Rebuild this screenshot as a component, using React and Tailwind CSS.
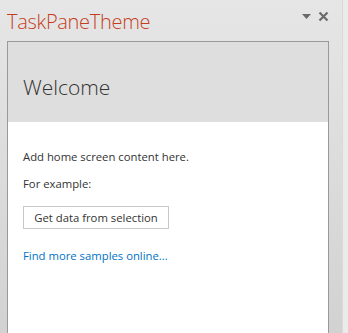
export default function App() {
  return (
    <div className="w-[348px] h-[333px] flex overflow-hidden" style={{ fontFamily: '"Open Sans", "Segoe UI", sans-serif' }}>
      <div className="w-[343px] h-full flex flex-col bg-gradient-to-b from-[#e6e6e6] to-[#d2d2d2] border-r border-[#d9d9d9]">
        <div className="h-[41px] flex items-start justify-between pl-[7px] pr-[13px]">
          <div className="text-[20px] leading-none font-light text-[#c43e1c] mt-[12px] tracking-[-0.3px]">TaskPaneTheme</div>
          <div className="flex items-center gap-[7px] mt-[11px]">
            <svg width="9" height="5" viewBox="0 0 9 5"><path d="M0 0h9L4.5 5z" fill="#6a6a6a" /></svg>
            <svg width="11" height="11" viewBox="0 0 11 11"><path d="M1.5 1.5l8 8M9.5 1.5l-8 8" stroke="#6a6a6a" strokeWidth="2.2" /></svg>
          </div>
        </div>
        <div className="ml-[7px] w-[322px] flex-1 border-l border-t border-r border-[#999] flex flex-col">
          <div className="h-[80px] bg-[#dedede] flex items-center pl-[15px]">
            <span className="text-[21px] font-light text-[#333] mt-[11px]">Welcome</span>
          </div>
          <div className="flex-1 bg-white pl-[15px] pt-[27px] text-[11.3px] text-[#333]">
            <p className="leading-[16px]">Add home screen content here.</p>
            <p className="leading-[16px] mt-[11px]">For example:</p>
            <button className="mt-[14px] h-[23px] w-[146px] border border-[#c8c8c8] bg-white text-[#333] text-[11.3px] leading-none">Get data from selection</button>
            <a className="block mt-[19px] text-[#0072c6] leading-[16px]">Find more samples online...</a>
          </div>
        </div>
      </div>
      <div className="flex-1 bg-[#ebebeb]" />
    </div>
  );
}
